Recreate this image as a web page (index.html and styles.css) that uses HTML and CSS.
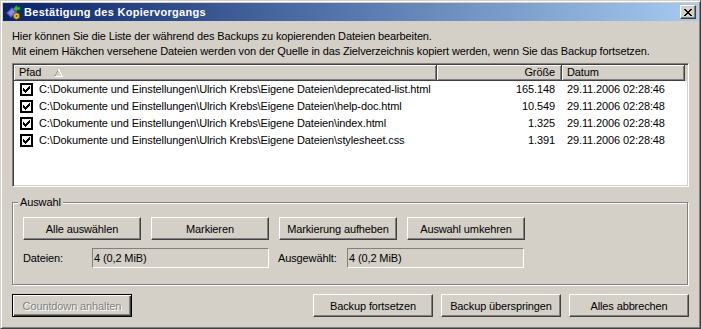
FILE: index.html
```html
<!DOCTYPE html>
<html lang="de">
<head>
    <meta charset="UTF-8">
    <title>Bestätigung des Kopiervorgangs</title>
    <link rel="stylesheet" href="styles.css">
</head>
<body>
    <div class="window">
        <div class="titlebar">
            <svg class="app-icon" width="16" height="16" viewBox="0 0 16 16">
                <polygon points="1,9 7,3 12,8 6,14" fill="#5a5ab8" stroke="#2a2a70" stroke-width="0.8"/>
                <polygon points="3,9 7,5 10,8 6,12" fill="#8c8ce0"/>
                <path d="M8 5 L12 1 L12 3 L15 3 L15 6 L12 6 L12 8 Z" fill="#3cb43c" stroke="#1a6a1a" stroke-width="0.6"/>
                <circle cx="11.5" cy="12" r="3.2" fill="#e8c020" stroke="#6a5000" stroke-width="0.8"/>
                <circle cx="11.5" cy="12" r="1" fill="#6a5000"/>
            </svg>
            <span class="title">Bestätigung des Kopiervorgangs</span>
            <div class="close-btn">
                <svg width="8" height="7" viewBox="0 0 8 7" shape-rendering="crispEdges">
                    <path d="M0 0h2v1H0z M6 0h2v1H6z M1 1h2v1H1z M5 1h2v1H5z M2 2h4v1H2z M3 3h2v1H3z M2 4h4v1H2z M1 5h2v1H1z M5 5h2v1H5z M0 6h2v1H0z M6 6h2v1H6z" fill="#000"/>
                </svg>
            </div>
        </div>

        <div class="content">
            <p class="intro">
                Hier können Sie die Liste der während des Backups zu kopierenden Dateien bearbeiten.<br>
                Mit einem Häkchen versehene Dateien werden von der Quelle in das Zielverzeichnis kopiert werden, wenn Sie das Backup fortsetzen.
            </p>

            <div class="listview">
                <div class="lv-header">
                    <div class="hcol hcol-path">Pfad
                        <svg class="sort-arrow" width="9" height="8" viewBox="0 0 9 8" shape-rendering="crispEdges">
                            <path d="M0.5 7.5 L4.5 0.5" stroke="#a0a0a0" fill="none"/>
                            <path d="M4.5 0.5 L8.5 7.5 L0.5 7.5" stroke="#fff" fill="none"/>
                        </svg>
                    </div>
                    <div class="hcol hcol-size">Größe</div>
                    <div class="hcol hcol-date">Datum</div>
                </div>

                <div class="lv-row">
                    <div class="cell-path"><span class="check"><svg width="7" height="7" viewBox="0 0 7 7" shape-rendering="crispEdges"><path d="M6 0h1v1H6z M5 1h2v1H5z M0 2h1v1H0z M4 2h3v1H4z M0 3h2v1H0z M3 3h3v1H3z M0 4h5v1H0z M1 5h3v1H1z M2 6h1v1H2z"/></svg></span>C:\Dokumente und Einstellungen\Ulrich Krebs\Eigene Dateien\deprecated-list.html</div>
                    <div class="cell-size">165.148</div>
                    <div class="cell-date">29.11.2006 02:28:46</div>
                </div>
                <div class="lv-row">
                    <div class="cell-path"><span class="check"><svg width="7" height="7" viewBox="0 0 7 7" shape-rendering="crispEdges"><path d="M6 0h1v1H6z M5 1h2v1H5z M0 2h1v1H0z M4 2h3v1H4z M0 3h2v1H0z M3 3h3v1H3z M0 4h5v1H0z M1 5h3v1H1z M2 6h1v1H2z"/></svg></span>C:\Dokumente und Einstellungen\Ulrich Krebs\Eigene Dateien\help-doc.html</div>
                    <div class="cell-size">10.549</div>
                    <div class="cell-date">29.11.2006 02:28:48</div>
                </div>
                <div class="lv-row">
                    <div class="cell-path"><span class="check"><svg width="7" height="7" viewBox="0 0 7 7" shape-rendering="crispEdges"><path d="M6 0h1v1H6z M5 1h2v1H5z M0 2h1v1H0z M4 2h3v1H4z M0 3h2v1H0z M3 3h3v1H3z M0 4h5v1H0z M1 5h3v1H1z M2 6h1v1H2z"/></svg></span>C:\Dokumente und Einstellungen\Ulrich Krebs\Eigene Dateien\index.html</div>
                    <div class="cell-size">1.325</div>
                    <div class="cell-date">29.11.2006 02:28:48</div>
                </div>
                <div class="lv-row">
                    <div class="cell-path"><span class="check"><svg width="7" height="7" viewBox="0 0 7 7" shape-rendering="crispEdges"><path d="M6 0h1v1H6z M5 1h2v1H5z M0 2h1v1H0z M4 2h3v1H4z M0 3h2v1H0z M3 3h3v1H3z M0 4h5v1H0z M1 5h3v1H1z M2 6h1v1H2z"/></svg></span>C:\Dokumente und Einstellungen\Ulrich Krebs\Eigene Dateien\stylesheet.css</div>
                    <div class="cell-size">1.391</div>
                    <div class="cell-date">29.11.2006 02:28:48</div>
                </div>
            </div>

            <div class="groupbox">
                <span class="group-label">Auswahl</span>
                <div class="btn-row">
                    <button class="btn">Alle auswählen</button>
                    <button class="btn">Markieren</button>
                    <button class="btn">Markierung aufheben</button>
                    <button class="btn">Auswahl umkehren</button>
                </div>
                <div class="info-row">
                    <span class="info-label">Dateien:</span>
                    <span class="info-field">4 (0,2 MiB)</span>
                    <span class="info-label second">Ausgewählt:</span>
                    <span class="info-field">4 (0,2 MiB)</span>
                </div>
            </div>

            <div class="footer">
                <button class="btn default" disabled>Countdown anhalten</button>
                <div class="footer-right">
                    <button class="btn">Backup fortsetzen</button>
                    <button class="btn">Backup überspringen</button>
                    <button class="btn">Alles abbrechen</button>
                </div>
            </div>
        </div>
    </div>
</body>
</html>
```

FILE: styles.css
```css
body {
    margin: 0;
    font-family: 'Liberation Sans', Arial, sans-serif;
    font-size: 11px;
    letter-spacing: -0.12px;
    color: #000;
    background: #d4d0c8;
}

.window {
    width: 701px;
    height: 329px;
    box-sizing: border-box;
    background: #d4d0c8;
    border: 1px solid;
    border-color: #d4d0c8 #404040 #404040 #d4d0c8;
    box-shadow: inset 1px 1px #fff, inset -1px -1px #808080;
    padding: 2px;
    display: flex;
    flex-direction: column;
    overflow: hidden;
}

/* title bar */

.titlebar {
    height: 18px;
    flex-shrink: 0;
    display: flex;
    align-items: center;
    padding: 0 2px;
    background: linear-gradient(to right, #0a246a, #a6caf0);
    color: #fff;
}

.app-icon {
    flex-shrink: 0;
}

.title {
    margin-left: 3px;
    font-weight: bold;
    letter-spacing: 0.3px;
    white-space: nowrap;
}

.close-btn {
    margin-left: auto;
    width: 16px;
    height: 14px;
    box-sizing: border-box;
    background: #d4d0c8;
    border: 1px solid;
    border-color: #fff #404040 #404040 #fff;
    box-shadow: inset -1px -1px #808080;
    display: flex;
    align-items: center;
    justify-content: center;
    padding-right: 1px;
}

/* content */

.content {
    flex: 1;
    padding: 8px 9px 0 9px;
}

.intro {
    margin: 0;
    line-height: 15px;
    white-space: nowrap;
}

.listview {
    margin-top: 4px;
    height: 124px;
    box-sizing: border-box;
    border: 1px solid;
    border-color: #808080 #fff #fff #808080;
    box-shadow: inset 1px 1px #404040, inset -1px -1px #d4d0c8;
    padding: 1px;
    background: #fff;
}

.lv-header,
.lv-row {
    display: grid;
    grid-template-columns: 423px 125px 123px;
}

.lv-header {
    height: 16px;
    background: #d4d0c8;
}

.hcol {
    box-sizing: border-box;
    height: 16px;
    line-height: 15px;
    border-right: 1px solid #404040;
    border-bottom: 1px solid #404040;
    box-shadow: inset 1px 1px #fff, inset -1px -1px #808080;
    white-space: nowrap;
}

.hcol-path {
    padding-left: 5px;
    display: flex;
    align-items: center;
}

.sort-arrow {
    margin-left: 13px;
}

.hcol-size {
    text-align: right;
    padding-right: 6px;
}

.hcol-date {
    padding-left: 5px;
}

.lv-row {
    height: 17px;
    line-height: 17px;
    white-space: nowrap;
}

.cell-path {
    display: flex;
    align-items: center;
    padding-left: 6px;
}

.check {
    width: 13px;
    height: 13px;
    box-sizing: border-box;
    border: 2px solid #000;
    background: #fff;
    display: flex;
    align-items: center;
    justify-content: center;
    margin-right: 6px;
}

.cell-size {
    text-align: right;
    padding-right: 7px;
}

.cell-date {
    padding-left: 5px;
}

/* group box */

.groupbox {
    position: relative;
    margin-top: 15px;
    width: 676px;
    border: 1px solid #808080;
    box-shadow: inset 1px 1px #fff, 1px 1px #fff;
    padding: 14px 10px 16px 10px;
    box-sizing: border-box;
}

.group-label {
    position: absolute;
    top: -7px;
    left: 5px;
    padding: 0 2px;
    line-height: 13px;
    background: #d4d0c8;
}

.btn-row {
    display: flex;
    gap: 10px;
}

.btn {
    width: 118px;
    height: 23px;
    box-sizing: border-box;
    padding: 0;
    font-family: 'Liberation Sans', Arial, sans-serif;
    font-size: 11px;
    letter-spacing: -0.12px;
    color: #000;
    background: #d4d0c8;
    border: 1px solid;
    border-color: #fff #404040 #404040 #fff;
    box-shadow: inset -1px -1px #808080;
    white-space: nowrap;
}

.info-row {
    display: flex;
    align-items: center;
    margin-top: 8px;
}

.info-label {
    width: 69px;
}

.info-label.second {
    margin-left: 9px;
}

.info-field {
    width: 177px;
    height: 20px;
    box-sizing: border-box;
    line-height: 18px;
    padding-left: 1px;
    border: 1px solid;
    border-color: #808080 #fff #fff #808080;
}

/* bottom buttons */

.footer {
    display: flex;
    margin-top: 9px;
}

.footer .btn {
    width: 120px;
}

.footer-right {
    margin-left: auto;
    display: flex;
    gap: 8px;
}

.btn.default {
    border: 1px solid #000;
    box-shadow: inset 1px 1px #fff, inset -1px -1px #404040, inset -2px -2px #808080;
    color: #808080;
    text-shadow: 1px 1px #fff;
}
```
